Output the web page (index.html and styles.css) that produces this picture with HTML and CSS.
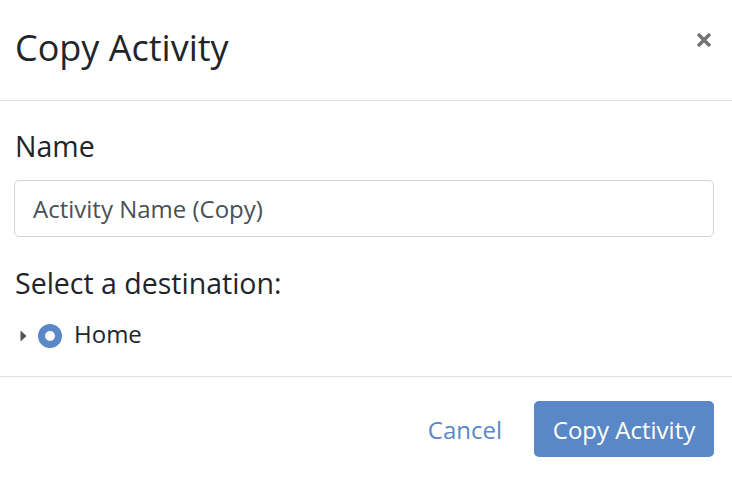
FILE: index.html
```html
<!DOCTYPE html>
<html>
<head>
<meta charset="utf-8">
<link rel="stylesheet" href="styles.css">
</head>
<body>
<div class="modal">
  <div class="modal-header">
    <h4 class="modal-title">Copy Activity</h4>
    <button class="close" aria-label="Close">
      <svg width="16" height="16" viewBox="0 0 16 16"><path d="M2 2L14 14M14 2L2 14" stroke="#737373" stroke-width="3.4" stroke-linecap="butt"/></svg>
    </button>
  </div>
  <div class="modal-body">
    <label class="label">Name</label>
    <input class="input" type="text" value="Activity Name (Copy)">
    <div class="label dest">Select a destination:</div>
    <div class="tree-row">
      <svg class="caret" width="7" height="12" viewBox="0 0 7 12"><path d="M0.5 0.5L6.5 6L0.5 11.5Z" fill="#555"/></svg>
      <span class="radio"></span>
      <span class="tree-label">Home</span>
    </div>
  </div>
  <div class="modal-footer">
    <button class="btn-link">Cancel</button>
    <button class="btn-primary">Copy Activity</button>
  </div>
</div>
</body>
</html>
```
FILE: styles.css
```css
* { box-sizing: border-box; }
html, body { margin: 0; padding: 0; background: #fff; }
body { font-family: "Open Sans", "Liberation Sans", sans-serif; color: #212529; }
.modal { width: 732px; height: 477px; display: flex; flex-direction: column; }
.modal-header {
  height: 101px;
  display: flex;
  align-items: flex-start;
  justify-content: space-between;
  padding: 23px 20px 0 15px;
  border-bottom: 1px solid #dee2e6;
}
.modal-title { margin: 0; font-size: 36px; font-weight: 400; line-height: 50px; }
.close { border: 0; background: none; padding: 0; margin-top: 9px; width: 16px; height: 16px; display: flex; }
.modal-body { padding: 25px 18px 0 14px; height: 276px; border-bottom: 1px solid #dee2e6; }
.label { display: block; font-size: 28.5px; line-height: 40px; margin-left: 1px; }
.input {
  display: block;
  width: 100%;
  height: 57px;
  margin-top: 14px;
  border: 1px solid #ced4da;
  border-radius: 5px;
  padding: 0 18px;
  font-family: inherit;
  font-size: 24px;
  color: #495057;
}
.dest { margin-top: 26px; }
.tree-row { display: flex; align-items: center; margin-top: 14px; height: 34px; }
.caret { margin-left: 6px; margin-top: 4px; }
.radio {
  width: 24px; height: 24px; border-radius: 50%;
  border: 7.5px solid #5a88c6; background: #fff;
  margin-left: 11px; margin-top: 4px;
}
.tree-label { font-size: 24px; line-height: 34px; margin-left: 12px; }
.modal-footer {
  flex: 1;
  display: flex;
  justify-content: flex-end;
  align-items: flex-start;
  padding: 24px 18px 0 0;
}
.btn-link {
  border: 0; background: none; font-family: inherit; font-size: 24px; color: #5a88c6;
  height: 56px; padding: 0 32px 0 0;
}
.btn-primary {
  border: 0; border-radius: 5px; background: #5a88c6; color: #fff;
  font-family: inherit; font-size: 24px; height: 56px; width: 180px; padding: 0;
}
```
